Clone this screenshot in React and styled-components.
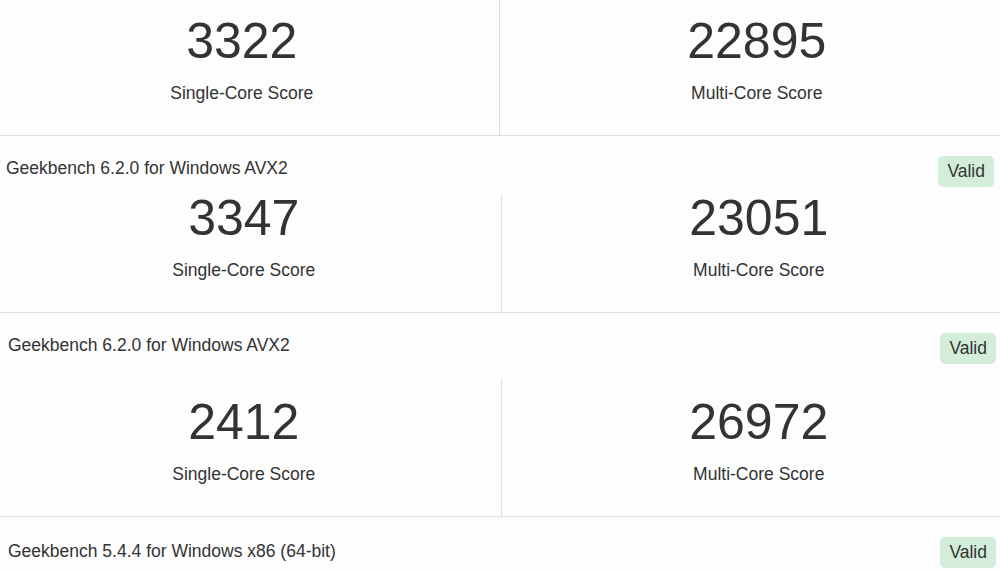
import React from "react";
import styled, { createGlobalStyle } from "styled-components";

const GlobalStyle = createGlobalStyle`
  html, body {
    margin: 0;
    padding: 0;
    background: #fdfdfd;
    overflow: hidden;
  }
  body {
    font-family: "Liberation Sans", Arial, sans-serif;
    color: #333;
    font-size: 17.5px;
  }
`;

const Page = styled.div`
  width: 1000px;
  overflow: hidden;
`;

const Card = styled.section`
  border-bottom: 1px solid #dedede;
`;

const Header = styled.div`
  display: flex;
  justify-content: space-between;
  align-items: flex-start;
  height: ${(p) => p.height}px;
  padding: 0 4px 0 ${(p) => p.shift}px;
  box-sizing: border-box;
`;

const Title = styled.h3`
  margin: 0;
  padding-top: ${(p) => p.top}px;
  font-size: 17.5px;
  font-weight: 400;
  line-height: 26px;
`;

const Badge = styled.span`
  margin-top: 20px;
  margin-right: ${(p) => p.right}px;
  padding: 3px 9px;
  line-height: 25px;
  font-size: 17.5px;
  background: #d4edda;
  color: #333;
  border-radius: 5px;
`;

const Scores = styled.div`
  display: grid;
  grid-template-columns: 1fr 1fr;
  width: 1029px;
  margin-left: ${(p) => p.offset}px;
`;

const Score = styled.div`
  display: flex;
  flex-direction: column;
  align-items: center;
  padding: ${(p) => p.top}px 0 29px;
  border-right: ${(p) => (p.divider ? "1px solid #dedede" : "none")};
`;

const Value = styled.div`
  font-size: 50px;
  line-height: 46px;
`;

const Label = styled.div`
  margin-top: 16px;
  line-height: 26px;
`;

const cards = [
  {
    header: null,
    offset: -15,
    top: 18,
    single: 3322,
    multi: 22895,
  },
  {
    header: { title: "Geekbench 6.2.0 for Windows AVX2", height: 58, shift: 6, titleTop: 19, right: 2 },
    offset: -13,
    top: 1,
    single: 3347,
    multi: 23051,
  },
  {
    header: { title: "Geekbench 6.2.0 for Windows AVX2", height: 65, shift: 8, titleTop: 19, right: 0 },
    offset: -13,
    top: 21,
    single: 2412,
    multi: 26972,
  },
  {
    header: { title: "Geekbench 5.4.4 for Windows x86 (64-bit)", height: 65, shift: 8, titleTop: 21, right: 0 },
    offset: -13,
    top: 21,
    single: null,
    multi: null,
  },
];

export default function App() {
  return (
    <Page>
      <GlobalStyle />
      {cards.map((c, i) => (
        <Card key={i}>
          {c.header && (
            <Header height={c.header.height} shift={c.header.shift}>
              <Title top={c.header.titleTop}>{c.header.title}</Title>
              <Badge right={c.header.right}>Valid</Badge>
            </Header>
          )}
          {c.single !== null && (
            <Scores offset={c.offset}>
              <Score top={c.top} divider>
                <Value>{c.single}</Value>
                <Label>Single-Core Score</Label>
              </Score>
              <Score top={c.top}>
                <Value>{c.multi}</Value>
                <Label>Multi-Core Score</Label>
              </Score>
            </Scores>
          )}
        </Card>
      ))}
    </Page>
  );
}
